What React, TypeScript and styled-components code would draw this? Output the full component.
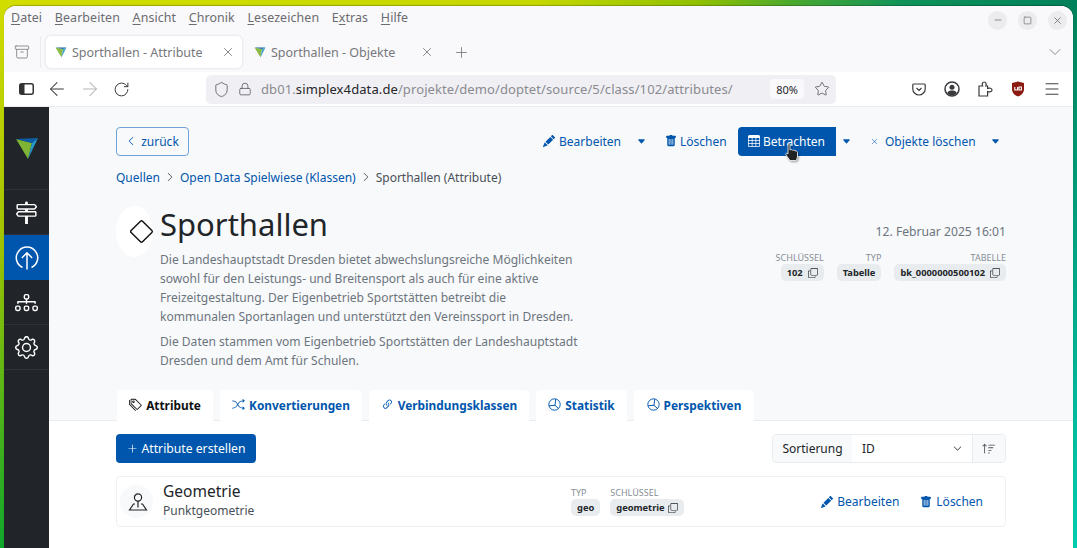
import React from 'react';
import styled, { createGlobalStyle } from 'styled-components';
import {
  BsCaretDownFill, BsChevronDown, BsChevronLeft, BsChevronRight, BsCopy, BsDiagram3, BsDiamond,
  BsGear, BsLink45Deg, BsPencilFill, BsPlusLg, BsShuffle, BsSignpost2, BsSortUp, BsTable,
  BsTags, BsTrashFill, BsXLg,
} from 'react-icons/bs';
import { ArrowLeft, ArrowRight, Archive, ChevronDown, Lock, Menu, Minus, Plus, RotateCw, Shield, Square, Star, X } from 'lucide-react';

const Global = createGlobalStyle`
  html, body { margin: 0; height: 548px; overflow: hidden; }
  body { font-family: "Noto Sans", "Open Sans", sans-serif; font-size: 12px; color: #212529; }
  * { box-sizing: border-box; }
  p { margin: 0; }
`;

const Desktop = styled.div`
  height: 548px;
  padding: 6px 4px 0 4px;
  background:
    linear-gradient(#d2dd00 0%, #a4c400 42%, #10a82c 100%) left / 4px 100% no-repeat,
    linear-gradient(#00805a 0%, #00cdb0 100%) right / 4px 100% no-repeat,
    linear-gradient(90deg, #d2dd00 0%, #c5d800 50%, #90c000 65%, #48a830 74%, #10925a 84%, #00805a 100%) top / 100% 20px no-repeat;
`;

const Window = styled.div`
  height: 542px;
  display: flex;
  flex-direction: column;
  border-radius: 12px 12px 0 0;
  overflow: hidden;
  background: #fff;
  box-shadow: 0 -1px 1px rgba(0, 0, 0, .25);
`;

const MenuBar = styled.div`
  height: 30px;
  flex: none;
  display: flex;
  align-items: center;
  padding: 0 6px 0 7px;
  background: #f9f9fb;
  color: #6b6b70;
`;

const MenuItem = styled.span`
  margin: 0 12.7px 8px 0;
  font-size: 12.4px;
  letter-spacing: 0.1px;
  u { text-underline-offset: 2px; }
`;

const WinControls = styled.div`
  margin: 0 0 2px auto;
  display: flex;
  gap: 11px;
`;

const WinButton = styled.span`
  width: 19px;
  height: 19px;
  border-radius: 50%;
  background: #ececee;
  display: flex;
  align-items: center;
  justify-content: center;
  color: #77777c;
`;

const TabBar = styled.div`
  height: 36px;
  flex: none;
  display: flex;
  align-items: center;
  padding: 0 8px 4px 0;
  background: #f9f9fb;
  color: #77777c;
`;

const TabListButton = styled.span`
  width: 37px;
  height: 32px;
  flex: none;
  display: flex;
  align-items: center;
  justify-content: center;
  border-right: 1px solid #ececee;
`;

const BrowserTab = styled.div<{ $active?: boolean }>`
  width: 196px;
  height: 32px;
  margin-left: ${p => (p.$active ? '5px' : '3px')};
  display: flex;
  align-items: center;
  padding: 0 7px 0 9px;
  gap: 5px;
  border-radius: 5px;
  font-size: 12.5px;
  background: ${p => (p.$active ? '#fff' : 'transparent')};
  box-shadow: ${p => (p.$active ? '0 0 3px rgba(0,0,0,.14)' : 'none')};
  span { flex: 1; white-space: nowrap; }
`;

const NewTab = styled.span`
  margin-left: 12px;
  display: flex;
`;

const TabMenu = styled.span`
  margin-left: auto;
  display: flex;
`;

const Toolbar = styled.div`
  height: 35px;
  flex: none;
  display: flex;
  align-items: center;
  padding: 0 12px 0 15px;
  background: #fff;
  color: #3a3a3e;
  border-bottom: 1px solid #ececee;
`;

const NavIcons = styled.div`
  display: flex;
  align-items: center;
  gap: 11.5px;
  margin-right: 76.5px;
`;

const UrlBar = styled.div`
  width: 630px;
  height: 29px;
  display: flex;
  align-items: center;
  padding: 0 6px 0 7px;
  border-radius: 5px;
  background: #f0f0f4;
  color: #5b5b66;
`;

const UrlLock = styled.span`
  margin-left: 8px;
  display: flex;
`;

const UrlText = styled.span`
  margin-left: 9px;
  font-size: 13px;
  letter-spacing: 0.1px;
  color: #8a8a90;
  white-space: nowrap;
  b { font-weight: 400; color: #26262a; }
`;

const Zoom = styled.span`
  margin-left: auto;
  width: 34px;
  height: 20px;
  border-radius: 4px;
  background: #f9f9fb;
  font-size: 11px;
  color: #26262a;
  display: flex;
  align-items: center;
  justify-content: center;
`;

const UrlStar = styled.span`
  margin-left: 10px;
  display: flex;
`;

const ToolIcons = styled.div`
  margin-left: auto;
  display: flex;
  align-items: center;
  gap: 18px;
`;

const Shell = styled.div`
  flex: 1;
  display: flex;
  min-height: 0;
`;

const Sidebar = styled.nav`
  width: 45px;
  flex: none;
  background: #212529;
  color: #fff;
`;

const LogoBox = styled.div`
  height: 83px;
  display: flex;
  align-items: center;
  justify-content: center;
  border-bottom: 1px solid #2d3238;
`;

const SideItem = styled.div<{ $active?: boolean }>`
  height: 45px;
  display: flex;
  align-items: center;
  justify-content: center;
  font-size: 23px;
  background: ${p => (p.$active ? '#0056ad' : 'transparent')};
  border-bottom: ${p => (p.$active ? 'none' : '1px solid #2d3238')};
`;

const Main = styled.main`
  flex: 1;
  min-width: 0;
  display: flex;
  flex-direction: column;
  background: #f8f9fb;
`;

const Head = styled.div`
  padding: 19px 67px 0 67px;
`;

const ActionRow = styled.div`
  display: flex;
  align-items: center;
  height: 30px;
`;

const BackButton = styled.span`
  width: 73px;
  height: 29px;
  border: 1px solid #6fa3d6;
  border-radius: 4px;
  color: #0056ad;
  display: flex;
  align-items: center;
  justify-content: center;
  gap: 5px;
  font-size: 12px;
`;

const Actions = styled.div`
  margin-left: auto;
  display: flex;
  align-items: center;
  position: relative;
`;

const ActionLink = styled.span<{ $width: number; $gap?: number }>`
  width: ${p => p.$width}px;
  height: 29px;
  display: flex;
  align-items: center;
  gap: ${p => p.$gap ?? 4}px;
  color: #0056ad;
  font-size: 12px;
  white-space: nowrap;
  svg { flex: none; }
`;

const PrimaryAction = styled.span`
  width: 98px;
  height: 29px;
  display: flex;
  align-items: center;
  padding-left: 10px;
  gap: 3px;
  border-radius: 4px 0 0 4px;
  background: #0056ad;
  color: #fff;
  font-size: 12px;
`;

const Caret = styled.span<{ $width: number; $inset?: number }>`
  width: ${p => p.$width}px;
  padding-left: ${p => p.$inset ?? 0}px;
  display: flex;
  color: #0056ad;
  font-size: 9px;
`;

const Cursor = styled.svg`
  position: absolute;
  left: 241px;
  top: 16px;
  filter: drop-shadow(1px 1px 1px rgba(0, 0, 0, .4));
`;

const Breadcrumb = styled.div`
  margin-top: 12px;
  height: 18px;
  display: flex;
  align-items: center;
  gap: 5px;
  font-size: 12px;
  color: #495057;
  a { color: #0056ad; }
`;

const HeadBody = styled.div`
  margin-top: 16px;
  display: flex;
`;

const TypeBubble = styled.span`
  width: 37px;
  height: 51px;
  flex: none;
  margin: 4px 7px 0 0;
  border-radius: 50%;
  background: #fff;
  color: #111;
  display: flex;
  align-items: center;
  justify-content: center;
  font-size: 25px;
  padding-left: 14px;
`;

const Intro = styled.div`
  width: 420px;
`;

const Title = styled.h1`
  margin: -1px 0 1px;
  height: 48px;
  font-size: 31px;
  font-weight: 400;
  line-height: 46px;
  color: #212529;
`;

const Description = styled.p`
  font-size: 12.05px;
  line-height: 19px;
  color: #6c757d;
  & + & { margin-top: 6px; }
`;

const Meta = styled.div`
  margin-left: auto;
  padding-top: 21px;
  text-align: right;
`;

const DateLine = styled.div`
  font-size: 12.15px;
  color: #6c757d;
  margin-bottom: 12px;
`;

const Fields = styled.div<{ $gap: number }>`
  display: flex;
  gap: ${p => p.$gap}px;
`;

const Field = styled.div<{ $left?: boolean }>`
  display: flex;
  flex-direction: column;
  align-items: ${p => (p.$left ? 'flex-start' : 'flex-end')};
`;

const FieldLabel = styled.span`
  font-size: 9px;
  line-height: 12px;
  color: #868e96;
  text-transform: uppercase;
`;

const Pill = styled.span<{ $gap?: number }>`
  height: 17px;
  padding: 0 6px;
  border-radius: 5px;
  background: #e9ecef;
  display: inline-flex;
  align-items: center;
  gap: ${p => p.$gap ?? 5}px;
  font-size: 9.3px;
  font-weight: 700;
  color: #212529;
  svg { font-size: 10px; }
`;

const TabsRow = styled.div`
  margin-top: 20px;
  height: 31px;
  flex: none;
  display: flex;
  gap: 7px;
  padding-left: 68px;
  border-bottom: 1px solid #e9ecef;
`;

const PageTab = styled.div<{ $active?: boolean; $width: number }>`
  width: ${p => p.$width}px;
  height: 31px;
  padding-bottom: 2px;
  display: flex;
  align-items: center;
  justify-content: center;
  gap: 4px;
  border-radius: 4px 4px 0 0;
  background: #fff;
  font-size: 11.85px;
  font-weight: 700;
  color: ${p => (p.$active ? '#111' : '#0056ad')};
`;

const Panel = styled.div`
  flex: 1;
  background: #fff;
  padding: 13px 67px 0 67px;
`;

const PanelBar = styled.div`
  display: flex;
  align-items: center;
  justify-content: space-between;
`;

const CreateButton = styled.span`
  width: 140px;
  height: 29px;
  border-radius: 4px;
  background: #0056ad;
  color: #fff;
  display: flex;
  align-items: center;
  justify-content: center;
  gap: 4px;
  font-size: 12.2px;
`;

const SortGroup = styled.div`
  width: 234px;
  height: 29px;
  display: flex;
  border: 1px solid #e9ecef;
  border-radius: 4px;
  overflow: hidden;
  font-size: 12px;
`;

const SortLabel = styled.span`
  width: 79px;
  background: #f8f9fa;
  display: flex;
  align-items: center;
  justify-content: center;
`;

const SortSelect = styled.span`
  flex: 1;
  display: flex;
  align-items: center;
  justify-content: space-between;
  padding: 0 10px;
  background: #fff;
  svg { font-size: 9px; }
`;

const SortButton = styled.span`
  width: 33px;
  background: #f8f9fa;
  border-left: 1px solid #e9ecef;
  display: flex;
  align-items: center;
  justify-content: center;
  font-size: 14px;
  color: #495057;
`;

const Card = styled.div`
  margin-top: 13px;
  height: 51px;
  display: flex;
  align-items: center;
  padding: 0 22px 0 3px;
  border: 1px solid #eef0f2;
  border-radius: 4px;
`;

const CardIcon = styled.span`
  width: 33px;
  height: 33px;
  flex: none;
  padding-left: 3px;
  border-radius: 50%;
  background: #f8f9fa;
  display: flex;
  align-items: center;
  justify-content: center;
`;

const CardText = styled.div`
  width: 408px;
  margin: 0 0 3px 10px;
`;

const CardTitle = styled.div`
  font-size: 15.5px;
  line-height: 22px;
`;

const CardSub = styled.div`
  font-size: 12px;
  line-height: 18px;
  color: #495057;
`;

const CardActions = styled.div`
  margin-left: auto;
  display: flex;
  gap: 21px;
`;

const CardAction = styled.span`
  display: flex;
  align-items: center;
  gap: 4px;
  color: #0056ad;
  font-size: 12px;
`;

const Favicon = () => (
  <svg width="12" height="11" viewBox="0 0 24 22">
    <polygon points="1,1 16,4 13,21" fill="#8dbb45" />
    <polygon points="1,1 23,1 16,4" fill="#0d5ea8" />
    <polygon points="23,1 16,4 13,21" fill="#49a5c6" />
  </svg>
);

const Logo = () => (
  <svg width="24" height="21" viewBox="0 0 24 21">
    <polygon points="1,1 17,5 13,21" fill="#7fb335" />
    <polygon points="1,1 23,0 17,5" fill="#0d5ea8" />
    <polygon points="23,0 17,5 13,21" fill="#2398c9" />
  </svg>
);

const UploadIcon = () => (
  <svg width="24" height="24" viewBox="0 0 24 24" fill="none" stroke="#fff" strokeWidth="1.5">
    <path d="M7.5 21.5 A10.7 10.7 0 1 1 16.5 21.5" />
    <path d="M12 23.5 V7 M6.8 12 L12 6.8 L17.2 12" />
  </svg>
);

const PieIcon = () => (
  <svg width="13" height="13" viewBox="0 0 16 16" fill="none" stroke="currentColor" strokeWidth="1.2">
    <circle cx="8" cy="8" r="7" />
    <path d="M9.5 1.2 L8.6 9 L1.2 9.6 M8.6 9 L13 13" />
  </svg>
);

const PointIcon = () => (
  <svg width="20" height="20" viewBox="0 0 20 20" fill="none" stroke="#212529" strokeWidth="1.2">
    <circle cx="10" cy="5.5" r="3.6" />
    <path d="M10 9 V15.5 M7 12 H5.5 L1.5 18 H18.5 L14.5 12 H13" />
  </svg>
);

const PocketIcon = () => (
  <svg width="14" height="13" viewBox="0 0 14 13" fill="none" stroke="#3a3a3e" strokeWidth="1.2">
    <path d="M1.5 1 H12.5 Q13.2 1 13.2 2 V6 C13.2 9.5 10 12 7 12 C4 12 .8 9.5 .8 6 V2 Q.8 1 1.5 1 Z M4.5 5 L7 7.5 L9.5 5" />
  </svg>
);

const ProfileIcon = () => (
  <svg width="16" height="16" viewBox="0 0 16 16">
    <circle cx="8" cy="8" r="7" fill="none" stroke="#3a3a3e" strokeWidth="1.5" />
    <circle cx="8" cy="6.2" r="2.5" fill="#3a3a3e" />
    <path d="M3.2 12 C4 10 6 9.6 8 9.6 C10 9.6 12 10 12.8 12 C11.5 13.6 10 14.2 8 14.2 C6 14.2 4.5 13.6 3.2 12 Z" fill="#3a3a3e" />
  </svg>
);

const ExtensionIcon = () => (
  <svg width="15" height="16" viewBox="0 0 15 16" fill="none" stroke="#3a3a3e" strokeWidth="1.2">
    <path d="M1 15 V5 H4.6 C3.8 3.2 4.4 1 6.2 1 C8 1 8.6 3.2 7.8 5 H9.6 V7.4 C11.6 6.6 14 7.2 14 9 C14 10.8 11.6 11.4 9.6 10.6 V15 Z" />
  </svg>
);

const UblockIcon = () => (
  <svg width="14" height="16" viewBox="0 0 14 16">
    <path d="M1 2 L7 0.5 L13 2 V8 C13 12 10 14.5 7 15.5 C4 14.5 1 12 1 8 Z" fill="#8b1a10" />
    <path d="M3.8 6 V9 H6.6 V6 M8 6 H10.4 V9 H8 Z" fill="none" stroke="#fff" strokeWidth="1.1" />
  </svg>
);

const SidebarToggle = () => (
  <svg width="15" height="12" viewBox="0 0 15 12">
    <rect x=".75" y=".75" width="13.5" height="10.5" rx="2" fill="none" stroke="#333" strokeWidth="1.5" />
    <rect x="1" y="1" width="4.5" height="10" fill="#333" />
  </svg>
);

const HandCursor = () => (
  <Cursor width="16" height="20" viewBox="0 0 16 20">
    <path d="M4 1.5 C4 .5 6 .5 6 1.5 V7 C7 6.3 8.3 6.6 8.6 7.3 C9.4 6.8 10.6 7.1 11 8 C12 7.6 13.5 8.2 13.5 9.5 V13 C13.5 15 12.5 16.5 12 17.5 H6 L2 12 C1 10.5 2.6 9.6 4 11 Z" fill="#222" stroke="#fff" strokeWidth="0.8" />
  </Cursor>
);

const menuItems = [
  ['', 'D', 'atei'],
  ['', 'B', 'earbeiten'],
  ['', 'A', 'nsicht'],
  ['', 'C', 'hronik'],
  ['', 'L', 'esezeichen'],
  ['E', 'x', 'tras'],
  ['', 'H', 'ilfe'],
];

const App = () => (
  <>
    <Global />
    <Desktop>
      <Window>
        <MenuBar>
          {menuItems.map(([before, key, after]) => (
            <MenuItem key={key}>{before}<u>{key}</u>{after}</MenuItem>
          ))}
          <WinControls>
            <WinButton><Minus size={10} /></WinButton>
            <WinButton><Square size={9} /></WinButton>
            <WinButton><X size={11} /></WinButton>
          </WinControls>
        </MenuBar>
        <TabBar>
          <TabListButton><Archive size={16} strokeWidth={1.2} /></TabListButton>
          <BrowserTab $active><Favicon /><span>Sporthallen - Attribute</span><X size={14} strokeWidth={1.5} /></BrowserTab>
          <BrowserTab><Favicon /><span>Sporthallen - Objekte</span><X size={14} strokeWidth={1.5} /></BrowserTab>
          <NewTab><Plus size={17} strokeWidth={1.2} /></NewTab>
          <TabMenu><ChevronDown size={20} strokeWidth={1} /></TabMenu>
        </TabBar>
        <Toolbar>
          <NavIcons>
            <SidebarToggle />
            <ArrowLeft size={22} strokeWidth={1.1} />
            <ArrowRight size={22} strokeWidth={1.1} color="#b5b5b9" />
            <RotateCw size={17} strokeWidth={1.4} />
          </NavIcons>
          <UrlBar>
            <Shield size={17} strokeWidth={1.2} />
            <UrlLock><Lock size={14} strokeWidth={1.4} /></UrlLock>
            <UrlText>db01.<b>simplex4data.de</b>/projekte/demo/doptet/source/5/class/102/attributes/</UrlText>
            <Zoom>80%</Zoom>
            <UrlStar><Star size={16} strokeWidth={1.3} /></UrlStar>
          </UrlBar>
          <ToolIcons>
            <PocketIcon />
            <ProfileIcon />
            <ExtensionIcon />
            <UblockIcon />
            <Menu size={18} strokeWidth={1.3} />
          </ToolIcons>
        </Toolbar>
        <Shell>
          <Sidebar>
            <LogoBox><Logo /></LogoBox>
            <SideItem><BsSignpost2 /></SideItem>
            <SideItem $active><UploadIcon /></SideItem>
            <SideItem><BsDiagram3 /></SideItem>
            <SideItem><BsGear /></SideItem>
          </Sidebar>
          <Main>
            <Head>
              <ActionRow>
                <BackButton><BsChevronLeft size={10} />zurück</BackButton>
                <Actions>
                  <ActionLink $width={94}><BsPencilFill size={12} />Bearbeiten</ActionLink>
                  <Caret $width={28}><BsCaretDownFill /></Caret>
                  <ActionLink $width={73} $gap={3}><BsTrashFill size={12} />Löschen</ActionLink>
                  <PrimaryAction><BsTable size={12} />Betrachten</PrimaryAction>
                  <Caret $width={35} $inset={6}><BsCaretDownFill /></Caret>
                  <ActionLink $width={120}><BsXLg size={7} style={{ marginRight: 3 }} />Objekte löschen</ActionLink>
                  <Caret $width={15}><BsCaretDownFill /></Caret>
                  <HandCursor />
                </Actions>
              </ActionRow>
              <Breadcrumb>
                <a>Quellen</a><BsChevronRight size={10} />
                <a>Open Data Spielwiese (Klassen)</a><BsChevronRight size={10} />
                <span>Sporthallen (Attribute)</span>
              </Breadcrumb>
              <HeadBody>
                <TypeBubble><BsDiamond /></TypeBubble>
                <Intro>
                  <Title>Sporthallen</Title>
                  <Description>Die Landeshauptstadt Dresden bietet abwechslungsreiche Möglichkeiten sowohl für den Leistungs- und Breitensport als auch für eine aktive Freizeitgestaltung. Der Eigenbetrieb Sportstätten betreibt die kommunalen Sportanlagen und unterstützt den Vereinssport in Dresden.</Description>
                  <Description>Die Daten stammen vom Eigenbetrieb Sportstätten der Landeshauptstadt Dresden und dem Amt für Schulen.</Description>
                </Intro>
                <Meta>
                  <DateLine>12. Februar 2025 16:01</DateLine>
                  <Fields $gap={13}>
                    <Field><FieldLabel>Schlüssel</FieldLabel><Pill>102 <BsCopy /></Pill></Field>
                    <Field><FieldLabel>Typ</FieldLabel><Pill>Tabelle</Pill></Field>
                    <Field><FieldLabel>Tabelle</FieldLabel><Pill>bk_0000000500102 <BsCopy /></Pill></Field>
                  </Fields>
                </Meta>
              </HeadBody>
            </Head>
            <TabsRow>
              <PageTab $active $width={96}><BsTags size={13} />Attribute</PageTab>
              <PageTab $width={142}><BsShuffle size={13} />Konvertierungen</PageTab>
              <PageTab $width={160}><BsLink45Deg size={13} />Verbindungsklassen</PageTab>
              <PageTab $width={91}><PieIcon />Statistik</PageTab>
              <PageTab $width={120}><PieIcon />Perspektiven</PageTab>
            </TabsRow>
            <Panel>
              <PanelBar>
                <CreateButton><BsPlusLg size={11} />Attribute erstellen</CreateButton>
                <SortGroup>
                  <SortLabel>Sortierung</SortLabel>
                  <SortSelect>ID<BsChevronDown /></SortSelect>
                  <SortButton><BsSortUp /></SortButton>
                </SortGroup>
              </PanelBar>
              <Card>
                <CardIcon><PointIcon /></CardIcon>
                <CardText>
                  <CardTitle>Geometrie</CardTitle>
                  <CardSub>Punktgeometrie</CardSub>
                </CardText>
                <Fields $gap={10}>
                  <Field $left><FieldLabel>Typ</FieldLabel><Pill>geo</Pill></Field>
                  <Field $left><FieldLabel>Schlüssel</FieldLabel><Pill $gap={3}>geometrie <BsCopy /></Pill></Field>
                </Fields>
                <CardActions>
                  <CardAction><BsPencilFill size={12} />Bearbeiten</CardAction>
                  <CardAction><BsTrashFill size={12} />Löschen</CardAction>
                </CardActions>
              </Card>
            </Panel>
          </Main>
        </Shell>
      </Window>
    </Desktop>
  </>
);

export default App;
